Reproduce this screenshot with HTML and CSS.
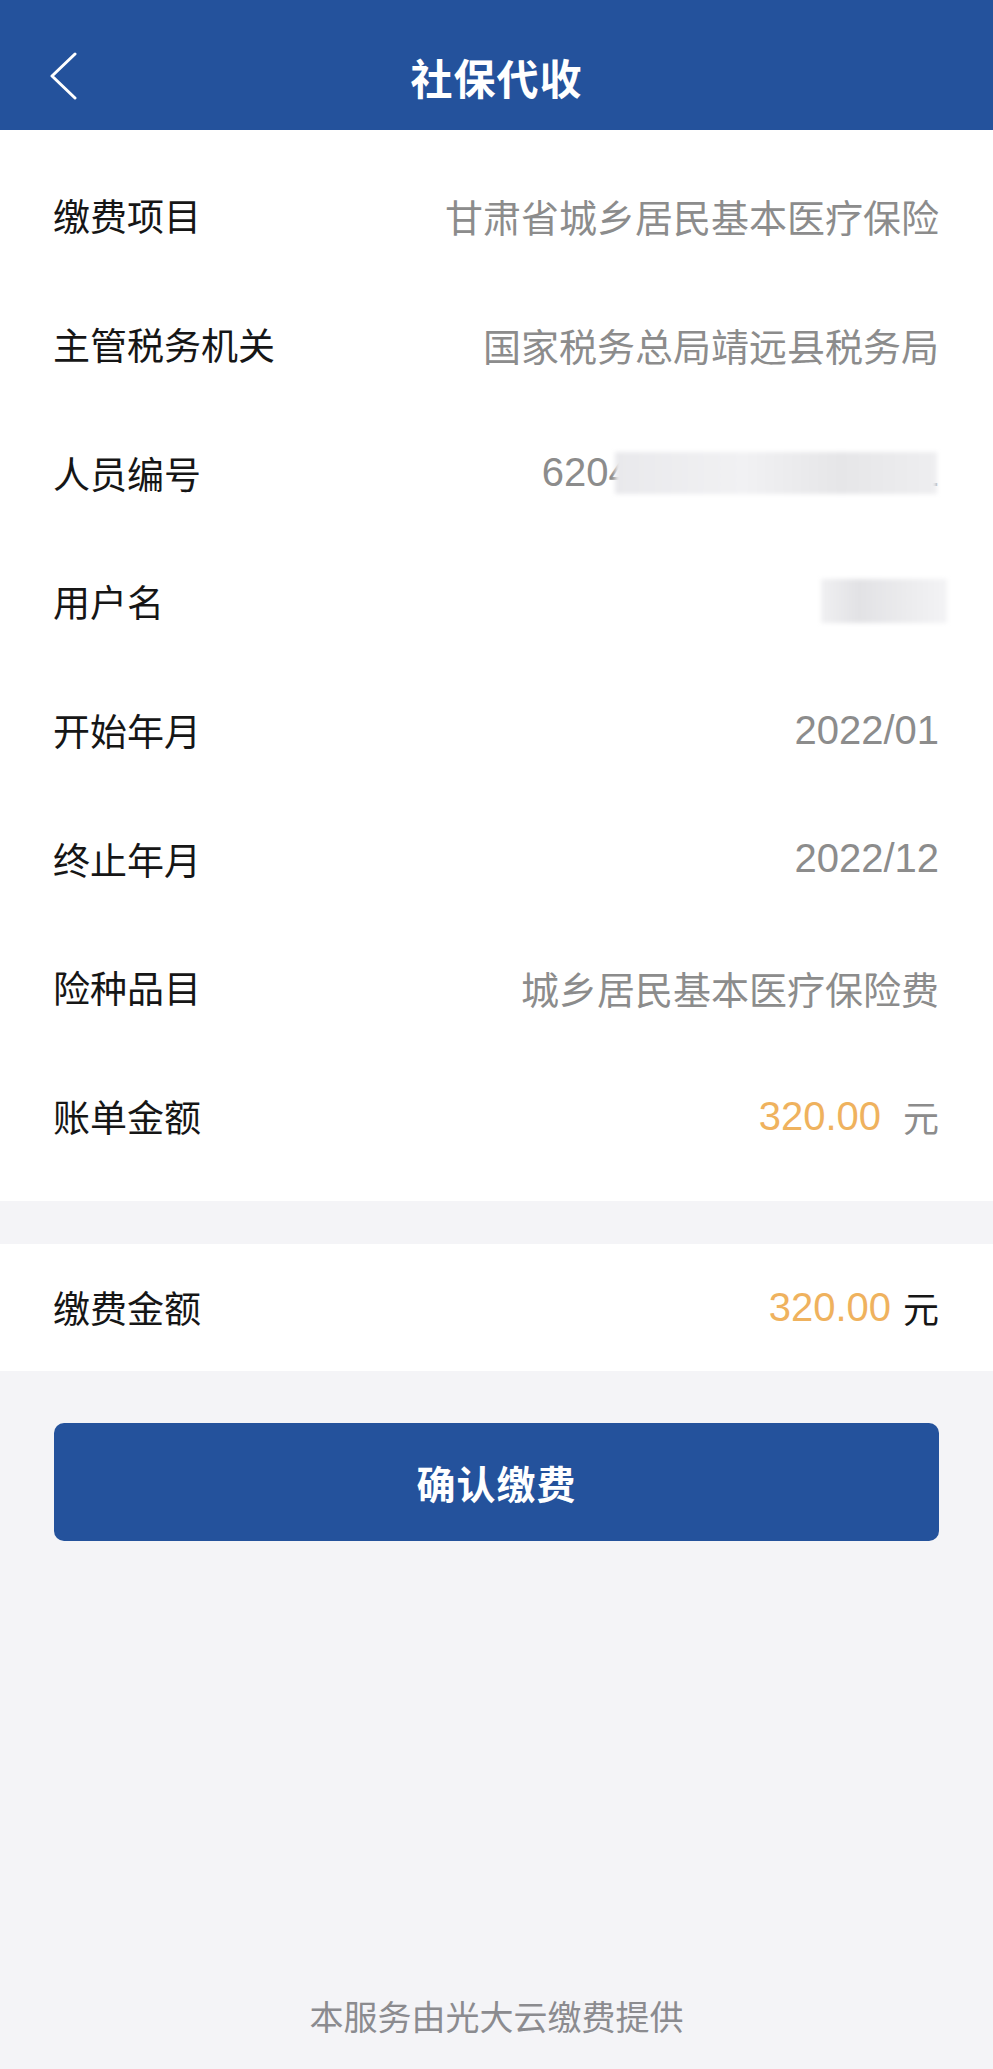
FILE: index.html
```html
<!DOCTYPE html>
<html lang="zh-CN">
<head>
<meta charset="utf-8">
<title>社保代收</title>
<link rel="stylesheet" href="styles.css">
</head>
<body>
<div class="page">
  <header class="topbar">
    <div class="back">
      <svg width="30" height="48" viewBox="0 0 30 48"><path d="M27 2 L4 24 L27 46" fill="none" stroke="#fff" stroke-width="3" stroke-linecap="round" stroke-linejoin="round"/></svg>
    </div>
    <div class="title">社保代收</div>
    <div class="spacer"></div>
  </header>

  <section class="card info">
    <div class="row"><span class="label">缴费项目</span><span class="value">甘肃省城乡居民基本医疗保险</span></div>
    <div class="row"><span class="label">主管税务机关</span><span class="value">国家税务总局靖远县税务局</span></div>
    <div class="row"><span class="label">人员编号</span>
      <span class="value num masked"><span>6204</span><span class="blur blur-long"></span><span class="tail">1</span></span>
    </div>
    <div class="row"><span class="label">用户名</span><span class="value masked"><span class="blur blur-short"></span></span></div>
    <div class="row"><span class="label">开始年月</span><span class="value num">2022/01</span></div>
    <div class="row"><span class="label">终止年月</span><span class="value num">2022/12</span></div>
    <div class="row"><span class="label">险种品目</span><span class="value">城乡居民基本医疗保险费</span></div>
    <div class="row"><span class="label">账单金额</span><span class="value"><span class="amount">320.00</span><span class="unit unit-gray">元</span></span></div>
  </section>

  <section class="card pay">
    <div class="row"><span class="label">缴费金额</span><span class="value"><span class="amount">320.00</span><span class="unit unit-dark">元</span></span></div>
  </section>

  <button class="confirm">确认缴费</button>

  <footer class="footer">本服务由光大云缴费提供</footer>
</div>
</body>
</html>
```

FILE: styles.css
```css
* { box-sizing: border-box; }
html, body { margin: 0; padding: 0; }
body {
  background: #f4f4f7;
  font-family: "Liberation Sans", "Noto Sans CJK SC", sans-serif;
}
.page {
  width: 993px;
  min-height: 2069px;
  display: flex;
  flex-direction: column;
  background: #f4f4f7;
}
.topbar {
  height: 130px;
  background: #24529c;
  padding-top: 22px;
  display: grid;
  grid-template-columns: 1fr auto 1fr;
  align-items: center;
}
.back {
  padding-left: 48px;
  display: flex;
  align-items: center;
}
.title {
  color: #fff;
  font-size: 42px;
  font-weight: 700;
  letter-spacing: 1px;
  font-family: "Noto Sans CJK SC", sans-serif;
}
.card {
  background: #fff;
  padding: 0 54px 0 53px;
}
.info {
  padding-top: 21px;
  padding-bottom: 20px;
}
.row {
  height: 128.7px;
  display: flex;
  align-items: center;
  justify-content: space-between;
}
.label {
  font-family: "Noto Sans CJK SC", sans-serif;
  font-size: 37px;
  color: #161616;
}
.value {
  font-size: 38px;
  color: #8c8c8c;
  display: flex;
  align-items: center;
}
.num { font-size: 40px; }
.masked { position: relative; }
.blur {
  display: inline-block;
  height: 42px;
  background: linear-gradient(90deg, #e9e9ec, #f1f1f3 40%, #e6e6e8 70%, #eeeef0);
  filter: blur(2px);
}
.blur-long { width: 322px; margin-left: -16px; margin-right: -6px; }
.blur-short { width: 126px; height: 44px; margin-right: -8px; background: linear-gradient(90deg, #f0f0f2, #e2e2e5 30%, #ececee 70%, #f3f3f5); }
.tail { color: #8c8c8c; margin-left: -14px; }
.amount {
  color: #efb25e;
  font-size: 40px;
}
.unit {
  font-family: "Noto Sans CJK SC", sans-serif;
  font-size: 36px;
}
.unit-gray { color: #8c8c8c; margin-left: 22px; }
.unit-dark { color: #161616; margin-left: 12px; }
.pay {
  margin-top: 43px;
  height: 127px;
  display: flex;
  flex-direction: column;
  justify-content: center;
}
.pay .row { height: 127px; }
.confirm {
  margin: 52px 54px 0 54px;
  height: 118px;
  border: none;
  border-radius: 10px;
  background: #24529c;
  color: #fff;
  font-family: "Noto Sans CJK SC", sans-serif;
  font-size: 39px;
  font-weight: 700;
  letter-spacing: 1px;
}
.footer {
  margin-top: auto;
  text-align: center;
  font-family: "Noto Sans CJK SC", sans-serif;
  font-size: 34px;
  line-height: 50px;
  color: #8b8b8f;
  padding-bottom: 28px;
}
```
